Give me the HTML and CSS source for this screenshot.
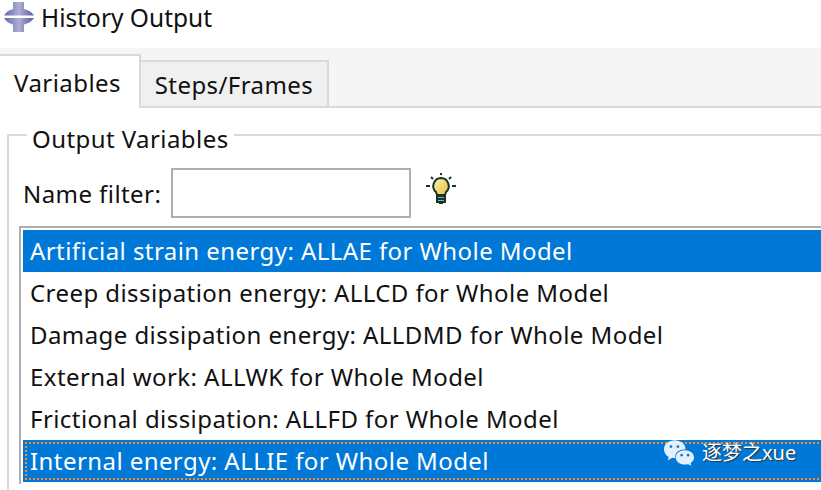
FILE: index.html
```html
<!DOCTYPE html>
<html lang="en">

<head>
    <meta charset="UTF-8">
    <title>History Output</title>

    <link rel="stylesheet" href="styles.css">
</head>

<body>

    <header class="titel">
        <svg class="app-ikon" width="30" height="30" viewBox="0 0 30 30">
            <defs>
                <linearGradient id="metal" x1="0" x2="1" y1="0" y2="0">
                    <stop offset="0" stop-color="#6464aa"/>
                    <stop offset="0.5" stop-color="#aeaed8"/>
                    <stop offset="1" stop-color="#5858a2"/>
                </linearGradient>
            </defs>
            <path fill="url(#metal)" d="M9 0h11v7c4 1 8 3 10 6.500H0C2 10 5 8 9 7zM0 16h30c-2 3.500-6 5.500-10 6.500V30H9v-7.500C5 21.500 2 19.500 0 16z"/>
        </svg>
        <span>History Output</span>
    </header>

    <nav class="faner">
        <button class="fane valgt">Variables</button>
        <button class="fane">Steps/Frames</button>
    </nav>

    <main class="panel">
        <fieldset class="gruppe">
            <legend>Output Variables</legend>

            <div class="filter">
                <label for="navn">Name filter:</label>
                <input id="navn" type="text">
                <svg class="paere" width="30" height="32" viewBox="0 0 30 32">
                    <defs>
                        <linearGradient id="glas" x1="0" x2="1" y1="0" y2="1">
                            <stop offset="0" stop-color="#fff3b0"/>
                            <stop offset="1" stop-color="#e8bd3c"/>
                        </linearGradient>
                    </defs>
                    <path fill="none" stroke="#12352a" stroke-width="2" d="M15 0v2M5 4l2 2M25 4l-2 2M0 13h4M26 13h4"/>
                    <path fill="url(#glas)" stroke="#12352a" stroke-width="2" d="M15 5a8 8 0 0 0-5 14l1 3h8l1-3a8 8 0 0 0-5-14z"/>
                    <path fill="#9aa89f" stroke="#12352a" stroke-width="2" d="M11 23h8v6h-8z"/>
                    <path stroke="#12352a" stroke-width="2" d="M11 26h8M13 30h4"/>
                </svg>
            </div>

            <ul class="liste">
                <li class="valgt">Artificial strain energy: ALLAE for Whole Model</li>
                <li>Creep dissipation energy: ALLCD for Whole Model</li>
                <li>Damage dissipation energy: ALLDMD for Whole Model</li>
                <li>External work: ALLWK for Whole Model</li>
                <li>Frictional dissipation: ALLFD for Whole Model</li>
                <li class="valgt fokus">Internal energy: ALLIE for Whole Model</li>
            </ul>
        </fieldset>
    </main>

    <!-- vandmaerke ovenpaa listen -->
    <div class="maerke">
        <svg width="30" height="26" viewBox="0 0 28 24">
            <path fill="#e3eff9" d="M10 0c5.500 0 10 3.400 10 7.800 0 .4 0 .7-.1 1-4.700-.6-9.400 2.400-9.400 6.700 0 .5.100 1 .2 1.400-1.100 0-2.100-.1-3-.4L3.500 19l.8-3.300C1.700 14.200 0 11.500 0 8 0 3.500 4.500 0 10 0z"/>
            <path fill="#e3eff9" d="M19.500 9.500c4.700 0 8.500 2.900 8.500 6.600 0 2.200-1.300 4-3.200 5.200l.7 2.700-3-1.600c-.9.200-2 .4-3 .4-4.700 0-8.500-3-8.500-6.700 0-3.700 3.800-6.600 8.500-6.600z"/>
            <circle cx="6.500" cy="6" r="1.300" fill="#0a76d6"/>
            <circle cx="13" cy="6" r="1.300" fill="#0a76d6"/>
            <circle cx="16.500" cy="14" r="1.200" fill="#0a76d6"/>
            <circle cx="22.500" cy="14" r="1.200" fill="#0a76d6"/>
        </svg>
        <span>逐梦之xue</span>
    </div>

</body>

</html>
```

FILE: styles.css
```css
body {
    margin: 0;
    width: 821px;
    height: 490px;
    overflow: hidden;
    position: relative;
    background-color: white;
    color: #111;
    font-family: "Noto Sans", "Noto Sans CJK SC", sans-serif;
    font-size: 24px;
    letter-spacing: 0.43px;
}

.titel {
    height: 48px;
    display: flex;
    align-items: flex-start;
    gap: 7px;
    padding: 2px 0 0 4px;
    box-sizing: border-box;
    font-size: 24.5px;
    letter-spacing: 0;
    line-height: 32px;
}

.faner {
    height: 60px;
    display: flex;
    align-items: flex-end;
    background-color: #f5f5f5;
    border-bottom: 2px solid #d9d9d9;
    box-sizing: border-box;
}

.fane {
    font: inherit;
    letter-spacing: inherit;
    color: inherit;
    height: 46px;
    width: 188px;
    padding: 0;
    margin: 0;
    background-color: #f0f0f0;
    border: 2px solid #d9d9d9;
    border-bottom: 0;
}

.fane.valgt {
    width: 141px;
    height: 54px;
    margin-bottom: -2px;
    background-color: white;
    border-left: 0;
    padding: 0 4px 0 0;
}

.fane + .fane {
    border-left: 0;
}

.panel {
    padding: 7px 0 0 7px;
}

.gruppe {
    margin: 0;
    padding: 0 0 0 10px;
    border: 2px solid #d9d9d9;
    border-right: 0;
    border-bottom: 0;
    height: 375px;
    box-sizing: border-box;
}

.gruppe legend {
    padding: 8px 5px 0;
    margin-left: 8px;
    line-height: 32px;
}

.filter {
    display: flex;
    align-items: center;
    gap: 10px;
    margin-top: 13px;
    padding-left: 4px;
}

.filter input {
    width: 240px;
    height: 50px;
    box-sizing: border-box;
    border: 2px solid #adadb3;
    background-color: white;
    outline: none;
}

.paere {
    margin-left: 5px;
    margin-bottom: 9px;
}

.liste {
    list-style: none;
    margin: 8px -20px 0 0;
    padding: 2px;
    border: 2px solid #adadb3;
    border-right: 0;
    border-bottom: 0;
}

.liste li {
    height: 42px;
    line-height: 42px;
    padding-left: 7px;
    white-space: nowrap;
}

.liste .valgt {
    background-color: #0078d7;
    color: white;
}

/* prikket fokusramme, firkantede prikker som i windows */
.liste .fokus {
    background-image:
        repeating-linear-gradient(90deg, #ff8a1e 0 2px, transparent 2px 4px),
        repeating-linear-gradient(90deg, #ff8a1e 0 2px, transparent 2px 4px),
        repeating-linear-gradient(0deg, #ff8a1e 0 2px, transparent 2px 4px);
    background-repeat: no-repeat;
    background-size: 100% 2px, 100% 2px, 2px 36px;
    background-position: 2px 2px, 2px 38px, 2px 4px;
}

.maerke {
    position: absolute;
    left: 664px;
    top: 440px;
    display: flex;
    align-items: flex-start;
    gap: 8px;
    color: white;
    font-size: 20px;
    letter-spacing: 0;
    line-height: 26px;
    text-shadow: 1px 1px 1px #333;
}
```
